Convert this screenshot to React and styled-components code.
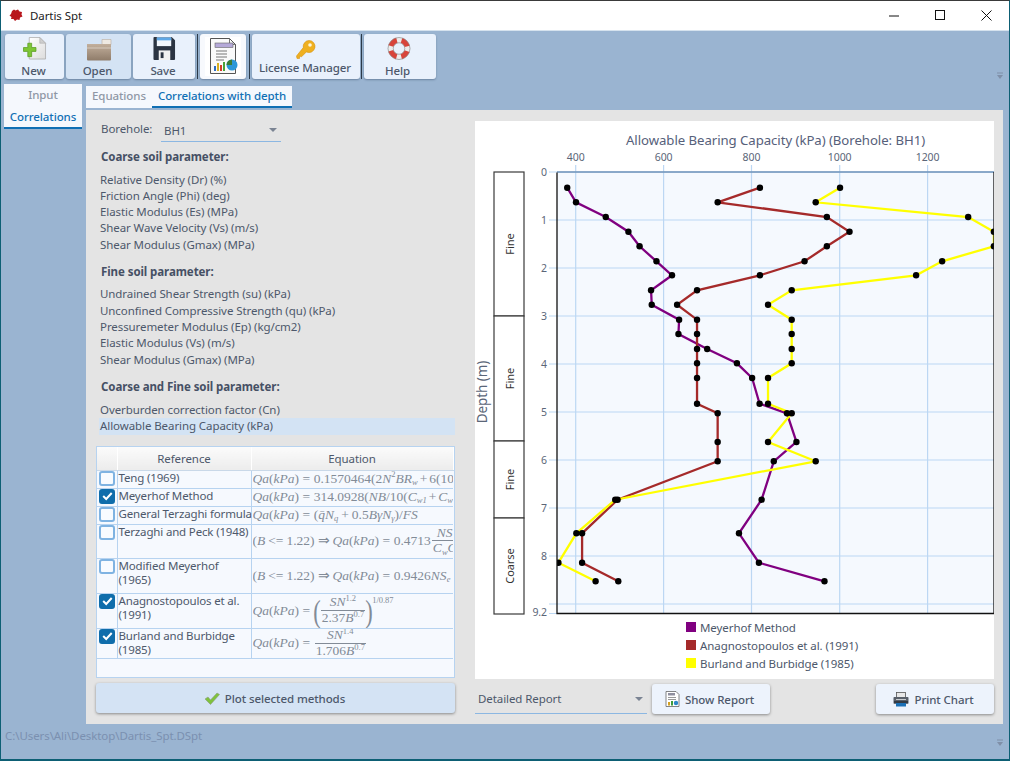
import React from "react";
import styled, { createGlobalStyle } from "styled-components";

const Global = createGlobalStyle`
  html, body { margin: 0; padding: 0; background: #9ab4d1; }
  * { box-sizing: border-box; }
`;

const font = `"Noto Sans", "Open Sans", sans-serif`;
const ink = "#4d586b";

const Window = styled.div`
  width: 1010px; height: 761px; display: flex; flex-direction: column; overflow: hidden;
  background: #9ab4d1; border: 1px solid #0d5f74; border-top-color: #3a3a3a; border-bottom: 2px solid #0d5f74;
  font-family: ${font}; font-size: 11.5px; letter-spacing: -.08px; color: ${ink}; position: relative;
`;
const TitleBar = styled.div`
  height: 30px; background: #fff; display: flex; align-items: center; padding-left: 8px; flex: none;
  border-bottom: 1px solid #d5e2ee; color: #222; font-size: 11.5px;
`;
const TitleText = styled.span` margin-left: 7px; flex: 1; `;
const WinButton = styled.div`
  width: 46px; height: 29px; display: flex; align-items: center; justify-content: center;
`;
const Toolbar = styled.div`
  display: flex; align-items: flex-start; height: 53px; padding: 3px 0 0 4px; flex: none;
`;
const ToolButton = styled.div`
  width: ${p => p.$w}px; height: 45px; margin-right: ${p => p.$mr ?? 2}px; border-radius: 3px;
  background: ${p => p.$active ? "#d4e3f4" : p.$white ? "#f7f9fd" : "#e9f1fc"};
  box-shadow: 0 1px 2px rgba(40, 60, 90, .4);
  display: flex; flex-direction: column; align-items: center; padding-top: ${p => p.$pt ?? 3}px; padding-right: ${p => p.$pr ?? 0}px; flex: none;
`;
const ToolLabel = styled.span`
  font-size: 11.5px; line-height: 16px; margin-top: ${p => p.$mt ?? 3}px; margin-right: 2px; color: ${ink}; white-space: nowrap; font-weight: 500;
`;
const ToolSep = styled.div` width: 1px; height: 45px; background: #2c3a48; margin: 0 2px 0 0; flex: none; `;
const Main = styled.div` display: flex; padding-left: 3px; flex: none; height: 640px; `;
const Nav = styled.div`
  width: 78px; height: 45px; background: #f5f8fd; display: flex; flex-direction: column; align-items: center; flex: none;
  border-bottom: 2px solid #0f6fb4;
`;
const NavItem = styled.div`
  height: 21.5px; line-height: 21.5px; font-weight: 500; color: ${p => p.$active ? "#1170b5" : "#8f97a5"};
`;
const Content = styled.div` margin-left: 4px; padding-top: 2px; width: 917px; display: flex; flex-direction: column; `;
const Tabs = styled.div` display: flex; background: #f5f8fd; width: 206px; height: 22px; flex: none; `;
const Tab = styled.div`
  width: ${p => p.$w}px; text-align: center; line-height: 20px; font-weight: 500; white-space: nowrap;
  color: ${p => p.$active ? "#1170b5" : "#8f97a5"};
  border-bottom: 2px solid ${p => p.$active ? "#0f6fb4" : "transparent"};
`;
const Panel = styled.div`
  margin-top: 2px; height: 614px; background: #e4e4e4; padding: 11px 9px 10px 10px;
  display: grid; grid-template-columns: 359px 519px; column-gap: 20px;
`;
const LeftCol = styled.div` display: flex; flex-direction: column; min-width: 0; `;
const BoreRow = styled.div` display: flex; height: 20px; padding-left: 5px; align-items: flex-start; `;
const BoreLabel = styled.span` width: 60px; line-height: 16px; `;
const Select = styled.div`
  width: ${p => p.$w}px; height: ${p => p.$h}px; border-bottom: 1px solid #8cb7e2; display: flex; align-items: center;
  justify-content: space-between; padding: 0 4px ${p => p.$pb ?? 0}px 3px; flex: none;
`;
const Arrow = styled.span`
  width: 0; height: 0; border-left: 4px solid transparent; border-right: 4px solid transparent; border-top: 4px solid #7b8493;
`;
const Heading = styled.div`
  height: 16px; line-height: 16px; padding-left: 5px; font-weight: 700; margin-top: ${p => p.$mt}px; color: #465064;
`;
const ParamList = styled.div` margin-top: 6.5px; display: flex; flex-direction: column; `;
const ParamRow = styled.div`
  height: 16.33px; line-height: 16.33px; margin-left: 3px; padding-left: 1px;
  background: ${p => p.$selected ? "#d3e3f4" : "transparent"};
`;
const TableWrap = styled.div`
  margin-top: 11.5px; height: 232px; border: 1px solid #b7d3f0; background: #f6f9fe; overflow: hidden; flex: none;
`;
const Table = styled.table`
  width: 356px; border-collapse: collapse; table-layout: fixed;
`;
const HeadCell = styled.th`
  height: 23px; font-weight: 400; text-align: center; padding: 0; font-size: 11.5px; color: ${ink};
  background: linear-gradient(#fbfbfb, #ececec); border-right: 1px solid #fff; border-bottom: 1px solid #c9d8e8;
`;
const Row = styled.tr` height: ${p => p.$h}px; `;
const CheckCell = styled.td`
  padding: 0 0 0 2px; vertical-align: top; border: 1px solid #b7d3f0; border-left: 0;
`;
const RefCell = styled.td`
  padding: 0 0 0 1px; vertical-align: top; line-height: 14.6px; border: 1px solid #b7d3f0; white-space: pre;
  letter-spacing: -.16px;
`;
const EqCell = styled.td`
  padding: 0 0 0 1px; vertical-align: middle; border: 1px solid #b7d3f0; border-right: 0; overflow: hidden; white-space: nowrap;
  font-family: "Liberation Serif", serif; font-size: 13.5px; line-height: 14px; color: #828b97; letter-spacing: 0;
`;
const Eq = styled.div` display: flex; align-items: center; width: 200px; overflow: hidden; height: ${p => p.$h}px; `;
const Mi = styled.i` font-style: italic; `;
const Sup = styled.span` font-size: 8.5px; position: relative; top: -5px; `;
const Sub = styled.span` font-size: 8.5px; position: relative; top: 3px; font-style: italic; `;
const Frac = styled.span` display: inline-flex; flex-direction: column; align-items: center; margin: 0 1px; flex: none; `;
const Num = styled.span` border-bottom: 1px solid #828b97; padding: 0 1px; line-height: 14px; align-self: stretch; text-align: center; `;
const Den = styled.span` line-height: 14px; padding: 0 1px; `;
const Paren = styled.span` font-size: 32px; line-height: 32px; width: 6px; display: inline-flex; justify-content: center; transform: scaleX(.7); flex: none; `;
const Outer = styled.span` font-size: 8.5px; align-self: flex-start; flex: none; line-height: 12px; `;
const Space = styled.span` display: inline-block; width: ${p => p.$w}px; flex: none; `;

const Box = styled.div`
  width: 16px; height: 15px; border-radius: 3px; display: flex; align-items: center; justify-content: center;
  border: 2px solid ${p => p.$on ? "#0f6dab" : "#7fb3e2"}; background: ${p => p.$on ? "#0f6dab" : "#f8fbff"};
`;
const PlotButton = styled.div`
  margin-top: 5px; height: 30px; background: #d4e3f4; border-radius: 3px; box-shadow: 0 1px 3px rgba(0,0,0,.4);
  display: flex; align-items: center; justify-content: center; gap: 5px; font-weight: 500; flex: none; padding-right: 2px;
`;
const RightCol = styled.div` display: flex; flex-direction: column; `;
const ChartCard = styled.div` height: 558px; background: #fff; display: flex; flex-direction: column; flex: none; `;
const ChartTitle = styled.div`
  height: 29px; padding: 9px 0 0 82px; line-height: 20px; text-align: center; font-size: 13.2px; flex: none; color: #56607a; letter-spacing: -.05px;
`;
const Legend = styled.div` display: flex; flex-direction: column; padding: 1px 0 0 211px; `;
const LegendRow = styled.div` height: 18px; display: flex; align-items: center; gap: 4px; `;
const Swatch = styled.span` width: 10px; height: 10px; background: ${p => p.$c}; flex: none; `;
const BottomBar = styled.div` display: flex; margin-top: 5px; height: 30px; align-items: stretch; `;
const ActionButton = styled.div`
  width: 118px; background: #edf3fc; border-radius: 3px; box-shadow: 0 1px 3px rgba(0,0,0,.4); margin-left: ${p => p.$ml}px;
  display: flex; align-items: center; justify-content: center; gap: 5px; font-weight: 500; flex: none; padding-right: 3px;
`;
const Status = styled.div` padding: 4px 0 0 4px; line-height: 16px; color: #7a90b0; `;
const Overflow = styled.svg` position: absolute; right: 5px; top: ${p => p.$top}px; `;

const AxisText = styled.text` font-family: ${font}; font-size: 10.5px; fill: #5b6678; `;
const AxisTitle = styled.text` font-family: ${font}; font-size: 13.5px; fill: #5b6678; `;
const SoilText = styled.text` font-family: ${font}; font-size: 11px; fill: #333; `;

const NewIcon = () => (
  <svg width="26" height="24" viewBox="0 0 26 24">
    <defs><linearGradient id="pg" x1="0" y1="0" x2="1" y2="1"><stop offset="0" stopColor="#fff" /><stop offset="1" stopColor="#dcdcdc" /></linearGradient></defs>
    <path d="M7 .5h11l6 6v16.5H7z" fill="url(#pg)" stroke="#aaa" strokeWidth=".8" />
    <path d="M18 .5v6h6z" fill="#cfcfcf" stroke="#aaa" strokeWidth=".6" />
    <path d="M5.5 6.5h4v4.5h4.5v4h-4.5v5.5h-4v-5.5H1v-4h4.5z" fill="#7ec636" stroke="#5a9c22" strokeWidth=".8" />
  </svg>
);
const FolderIcon = () => (
  <svg width="26" height="23" viewBox="0 0 26 23" style={{ marginTop: 2 }}>
    <defs><linearGradient id="fg" x1="0" y1="0" x2="0" y2="1"><stop offset="0" stopColor="#c2af9c" /><stop offset="1" stopColor="#8f7c6a" /></linearGradient></defs>
    <path d="M16 0.5h9v5h-9z" fill="#eee9e2" stroke="#b9ad9f" strokeWidth=".6" />
    <path d="M1 5h24v15.5a1 1 0 0 1-1 1H2a1 1 0 0 1-1-1z" fill="url(#fg)" />
    <path d="M1 9h24" stroke="#e0d6ca" strokeWidth=".8" />
  </svg>
);
const SaveIcon = () => (
  <svg width="23" height="24" viewBox="0 0 23 24">
    <path d="M1 0h18l3.5 3.5V23a1 1 0 0 1-1 1H1a1 1 0 0 1-1-1V1a1 1 0 0 1 1-1z" fill="#2b3442" />
    <rect x="3.5" y="0.5" width="15" height="9" fill="#f2f7fd" />
    <rect x="3.5" y="0.5" width="15" height="3" fill="#5ea7e6" />
    <rect x="5.5" y="14" width="12" height="10" fill="#f1f1f1" />
    <rect x="7.5" y="16" width="3" height="6" fill="#2b3442" />
  </svg>
);
const ReportIcon = () => (
  <svg width="36" height="39" viewBox="0 0 36 39" style={{ display: "block", background: "#fff" }}>
    <path d="M5.5 1.5h19l6 6v29h-25z" fill="#fafafa" stroke="#555" strokeWidth="1" />
    <path d="M24.5 1.5v6h6" fill="none" stroke="#555" strokeWidth=".8" />
    <rect x="10" y="6" width="18" height="4.5" fill="#b5a9d8" stroke="#666" strokeWidth=".6" />
    <path d="M11 14h11M11 17h11M11 20h11M11 23h8" stroke="#777" strokeWidth="1" />
    <rect x="9" y="29" width="2" height="5" fill="#2f6dc4" />
    <rect x="12" y="26" width="2" height="8" fill="#d8b020" />
    <rect x="15" y="28" width="2" height="6" fill="#d43a2a" />
    <rect x="18" y="25" width="2" height="9" fill="#4aa03a" />
    <circle cx="27" cy="28" r="5.5" fill="#2b97d8" />
    <path d="M27 28v-5.5a5.5 5.5 0 0 0-5.5 5.5z" fill="#3c7d36" />
  </svg>
);
const KeyIcon = () => (
  <svg width="20" height="19" viewBox="0 0 20 19">
    <path d="M13 0.5a6 6 0 1 1-2.6 11.4L5.5 16.8 3.6 16v2.4H1L.5 16l6.8-8.4A6 6 0 0 1 13 .5z" fill="#efb020" stroke="#d6920e" strokeWidth=".6" />
    <circle cx="14" cy="5" r="1.8" fill="#fff6d8" />
  </svg>
);
const BuoyIcon = () => (
  <svg width="24" height="24" viewBox="0 0 24 24">
    <circle cx="12" cy="12" r="8.8" fill="none" stroke="#ececec" strokeWidth="5.5" />
    <circle cx="12" cy="12" r="8.8" fill="none" stroke="#d8443a" strokeWidth="5.5" strokeDasharray="9 4.82" strokeDashoffset="4.5" transform="rotate(45 12 12)" />
    <circle cx="12" cy="12" r="11.5" fill="none" stroke="#8a8a8a" strokeWidth=".7" />
    <circle cx="12" cy="12" r="6" fill="none" stroke="#8a8a8a" strokeWidth=".7" />
  </svg>
);
const CheckIcon = () => (
  <svg width="16" height="13" viewBox="0 0 16 13">
    <path d="M1 7l3-2 2.5 3L13 1l2.5 1.5L6.5 12.5z" fill="#7fc23c" stroke="#8a9a80" strokeWidth=".6" />
  </svg>
);
const SmallReportIcon = () => (
  <svg width="15" height="16" viewBox="0 0 15 16">
    <path d="M1 .5h10l3 3v12H1z" fill="#fff" stroke="#666" strokeWidth=".8" />
    <rect x="3" y="2" width="7" height="2.5" fill="#8f8f9f" />
    <path d="M3 6.5h8M3 8.5h8" stroke="#999" />
    <rect x="3" y="11" width="2" height="3.5" fill="#d4a020" />
    <rect x="6" y="10" width="2" height="4.5" fill="#3c9a3a" />
    <circle cx="11" cy="12" r="2.2" fill="#2b87c8" />
  </svg>
);
const PrinterIcon = () => (
  <svg width="16" height="15" viewBox="0 0 16 15">
    <rect x="3.5" y=".5" width="9" height="5" fill="#e8e8e8" stroke="#555" strokeWidth=".8" />
    <path d="M1 5h14a1 1 0 0 1 .5 1v5.5H.5V6a1 1 0 0 1 .5-1z" fill="#59606a" />
    <rect x="1" y="9" width="14" height="2.5" fill="#333a44" />
    <rect x="3" y="11" width="10" height="3.5" fill="#1a6fb5" />
    <rect x="3" y="7" width="10" height="1" fill="#c8ccd0" />
  </svg>
);
const Splat = () => (
  <svg width="14" height="13" viewBox="0 0 14 13">
    <path d="M3 2l2-1.5 1.5 1L9 .5l1.5 2 2.5.5-.5 2.5 1 2-2.5 1-.5 2.5-2.5-.5-2 1.5-1.5-2L2 10 2.5 8 .5 6.5 2 5z" fill="#b8161c" />
  </svg>
);
const Tick = () => (
  <svg width="11" height="10" viewBox="0 0 11 10"><path d="M1.2 5l3 3 5.5-6" fill="none" stroke="#fff" strokeWidth="2" /></svg>
);

const sx = X => 480 + X / 2.958;
const levels = [187.7,202.3,217,231.7,246.3,261.3,275.3,290.3,304.7,319.7,334,349,363.3,378,403.7,413.3,442,461.3,499.7,533.3,562.7,581.3];
const series = [
  { name: "Meyerhof Method", c: "#800080", x: [258,284,372,439,472,522,568,506,508,589,587,672,760,805,827,908,936,869,833,766,825,1019] },
  { name: "Anagnostopoulos et al. (1991)", c: "#a52a2a", x: [828,703,1026,1093,1026,960,828,642,583,642,642,642,642,642,642,703,703,703,407,302,302,409] },
  { name: "Burland and Burbidge (1985)", c: "#ffff00", x: [1065,993,1444,1520,1520,1367,1290,922,852,922,922,922,922,852,852,922,852,993,400,285,232,342] },
];
const xTicks = [[575.7,"400"],[663.6,"600"],[751.5,"800"],[839.7,"1000"],[927.6,"1200"]];
const yTicks = [0,1,2,3,4,5,6,7,8].map(d => [172 + d * 48, String(d)]);
const soils = [[172,316,"Fine"],[316,441,"Fine"],[441,518,"Fine"],[518,614,"Coarse"]];

const Chart = () => (
  <svg width="519" height="467" viewBox="475 150 519 467" style={{ display: "block", flex: "none" }}>
    <defs><clipPath id="plot"><rect x="557" y="172" width="437" height="441" /></clipPath></defs>
    <AxisTitle x="487" y="392" textAnchor="middle" transform="rotate(-90 487 392)">Depth (m)</AxisTitle>
    {soils.map(([a, b, t], i) => (
      <g key={i}>
        <rect x="494" y={a} width="30" height={b - a} fill="#fff" stroke="#3a3a3a" strokeWidth="1.2" />
        <SoilText x="514" y={(a + b) / 2} textAnchor="middle" transform={`rotate(-90 514 ${(a + b) / 2})`}>{t}</SoilText>
      </g>
    ))}
    <rect x="557" y="172" width="437" height="441" fill="#f5f9fe" />
    {xTicks.map(([x, t]) => (
      <g key={t}>
        <path d={`M${x} 165V613`} stroke="#bcd7f3" strokeWidth="1.2" />
        <AxisText x={x} y="161" textAnchor="middle">{t}</AxisText>
      </g>
    ))}
    {yTicks.map(([y, t]) => (
      <g key={t}>
        <path d={`M549 ${y}H994`} stroke="#bcd7f3" strokeWidth="1.2" />
        <AxisText x="547" y={y + 3.5} textAnchor="end">{t}</AxisText>
      </g>
    ))}
    <path d="M549 604H994M549 613.5H557" stroke="#bcd7f3" strokeWidth="1.2" />
    <AxisText x="547" y="616" textAnchor="end">9.2</AxisText>
    <g clipPath="url(#plot)">
      {series.map(s => (
        <polyline key={s.c} fill="none" stroke={s.c} strokeWidth="2.3" points={s.x.map((X, i) => `${sx(X)},${levels[i]}`).join(" ")} />
      ))}
      {series.map(s => s.x.map((X, i) => <circle key={s.c + i} cx={sx(X)} cy={levels[i]} r="3.2" fill="#000" />))}
    </g>
    <path d="M557 172H994" stroke="#6f93b8" strokeWidth="1.5" />
    <path d="M557 172.5V613.5H994V172" fill="none" stroke="#111" strokeWidth="1.3" />
  </svg>
);

const params1 = ["Relative Density (Dr) (%)","Friction Angle (Phi) (deg)","Elastic Modulus (Es) (MPa)","Shear Wave Velocity (Vs) (m/s)","Shear Modulus (Gmax) (MPa)"];
const params2 = ["Undrained Shear Strength (su) (kPa)","Unconfined Compressive Strength (qu) (kPa)","Pressuremeter Modulus (Ep) (kg/cm2)","Elastic Modulus (Vs) (m/s)","Shear Modulus (Gmax) (MPa)"];

const QaLabel = () => <><Mi>Qa</Mi>(<Mi>kPa</Mi>)<Space $w={3.5} />=<Space $w={3.5} /></>;
const Cond = () => <>(<Mi>B</Mi><Space $w={3} />&lt;=<Space $w={3} />1.22)<Space $w={3} />⇒<Space $w={3} /><QaLabel /></>;

const rows = [
  { h: 18, on: false, ref: "Teng (1969)", eq: <><QaLabel />0.1570464(2<Mi>N</Mi><Sup>2</Sup><Mi>BR</Mi><Sub>w</Sub><Space $w={2} />+<Space $w={2} />6(10</> },
  { h: 18, on: true, ref: "Meyerhof Method", eq: <><QaLabel />314.0928(<Mi>NB</Mi>/10(<Mi>C</Mi><Sub>w1</Sub><Space $w={2} />+<Space $w={2} /><Mi>C</Mi><Sub>w</Sub></> },
  { h: 18, on: false, ref: "General Terzaghi formula", eq: <><QaLabel />(<Mi>q̄N</Mi><Sub>q</Sub><Space $w={3} />+<Space $w={3} />0.5<Mi>BγN</Mi><Sub>γ</Sub>)/<Mi>FS</Mi></> },
  { h: 34, on: false, ref: "Terzaghi and Peck (1948)", eq: <><Cond />0.4713<Frac><Num><Mi>NS</Mi></Num><Den><Mi>C</Mi><Sub>w</Sub><Mi>C</Mi></Den></Frac></> },
  { h: 35, on: false, ref: "Modified Meyerhof\n(1965)", eq: <><Cond />0.9426<Mi>NS</Mi><Sub>e</Sub></> },
  { h: 35, on: true, ref: "Anagnostopoulos et al.\n(1991)", eq: <><QaLabel /><Paren>(</Paren><Frac><Num><Mi>SN</Mi><Sup>1.2</Sup></Num><Den>2.37<Mi>B</Mi><Sup>0.7</Sup></Den></Frac><Paren>)</Paren><Outer>1/0.87</Outer></> },
  { h: 30, on: true, ref: "Burland and Burbidge\n(1985)", eq: <><QaLabel /><Frac><Num><Mi>SN</Mi><Sup>1.4</Sup></Num><Den>1.706<Mi>B</Mi><Sup>0.7</Sup></Den></Frac></> },
];

export default function App() {
  return (
    <Window>
      <Global />
      <TitleBar>
        <Splat />
        <TitleText>Dartis Spt</TitleText>
        <WinButton><svg width="11" height="2"><path d="M0 1h10" stroke="#111" /></svg></WinButton>
        <WinButton><svg width="11" height="11"><rect x=".5" y=".5" width="9" height="9" fill="none" stroke="#111" /></svg></WinButton>
        <WinButton><svg width="11" height="11"><path d="M.5.5l10 10M10.5.5l-10 10" stroke="#111" /></svg></WinButton>
      </TitleBar>
      <Toolbar>
        <ToolButton $w={59}><NewIcon /><ToolLabel>New</ToolLabel></ToolButton>
        <ToolButton $w={65} $active><FolderIcon /><ToolLabel $mt={1}>Open</ToolLabel></ToolButton>
        <ToolButton $w={62} $mr={2}><SaveIcon /><ToolLabel>Save</ToolLabel></ToolButton>
        <ToolSep />
        <ToolButton $w={46} $mr={3} $white><ReportIcon /></ToolButton>
        <ToolSep />
        <ToolButton $w={108} $mr={1} $pt={6}><KeyIcon /><ToolLabel $mt={1}>License Manager</ToolLabel></ToolButton>
        <ToolSep />
        <ToolButton $w={72} $mr={0} $pr={3}><BuoyIcon /><ToolLabel>Help</ToolLabel></ToolButton>
      </Toolbar>
      <Overflow $top={71} width="8" height="8" viewBox="0 0 8 8"><path d="M1 1h6" stroke="#7f8fa8" /><path d="M1 3h6L4 7z" fill="#7f8fa8" /></Overflow>
      <Main>
        <Nav>
          <NavItem>Input</NavItem>
          <NavItem $active>Correlations</NavItem>
        </Nav>
        <Content>
          <Tabs>
            <Tab $w={66}>Equations</Tab>
            <Tab $w={140} $active>Correlations with depth</Tab>
          </Tabs>
          <Panel>
            <LeftCol>
              <BoreRow>
                <BoreLabel>Borehole:</BoreLabel>
                <Select $w={120} $h={21} $pb={2}>BH1<Arrow /></Select>
              </BoreRow>
              <Heading $mt={8}>Coarse soil parameter:</Heading>
              <ParamList>{params1.map(p => <ParamRow key={p}>{p}</ParamRow>)}</ParamList>
              <Heading $mt={10.7}>Fine soil parameter:</Heading>
              <ParamList>{params2.map(p => <ParamRow key={p}>{p}</ParamRow>)}</ParamList>
              <Heading $mt={11.4}>Coarse and Fine soil parameter:</Heading>
              <ParamList>
                <ParamRow>Overburden correction factor (Cn)</ParamRow>
                <ParamRow $selected>Allowable Bearing Capacity (kPa)</ParamRow>
              </ParamList>
              <TableWrap>
                <Table>
                  <colgroup><col width="20" /><col width="134" /><col width="202" /></colgroup>
                  <thead>
                    <tr><HeadCell /><HeadCell>Reference</HeadCell><HeadCell>Equation</HeadCell></tr>
                  </thead>
                  <tbody>
                    {rows.map(r => (
                      <Row key={r.ref} $h={r.h}>
                        <CheckCell><Box $on={r.on}>{r.on && <Tick />}</Box></CheckCell>
                        <RefCell>{r.ref}</RefCell>
                        <EqCell><Eq $h={r.h - 1}>{r.eq}</Eq></EqCell>
                      </Row>
                    ))}
                  </tbody>
                </Table>
              </TableWrap>
              <PlotButton><CheckIcon />Plot selected methods</PlotButton>
            </LeftCol>
            <RightCol>
              <ChartCard>
                <ChartTitle>Allowable Bearing Capacity (kPa) (Borehole: BH1)</ChartTitle>
                <Chart />
                <Legend>
                  {series.map(s => <LegendRow key={s.name}><Swatch $c={s.c} />{s.name}</LegendRow>)}
                </Legend>
              </ChartCard>
              <BottomBar>
                <Select $w={172} $h={30}>Detailed Report<Arrow /></Select>
                <ActionButton $ml={5}><SmallReportIcon />Show Report</ActionButton>
                <ActionButton $ml={106}><PrinterIcon />Print Chart</ActionButton>
              </BottomBar>
            </RightCol>
          </Panel>
        </Content>
      </Main>
      <Status>C:\Users\Ali\Desktop\Dartis_Spt.DSpt</Status>
      <Overflow $top={738} width="8" height="8" viewBox="0 0 8 8"><path d="M1 1h6" stroke="#7f8fa8" /><path d="M1 3h6L4 7z" fill="#7f8fa8" /></Overflow>
    </Window>
  );
}
